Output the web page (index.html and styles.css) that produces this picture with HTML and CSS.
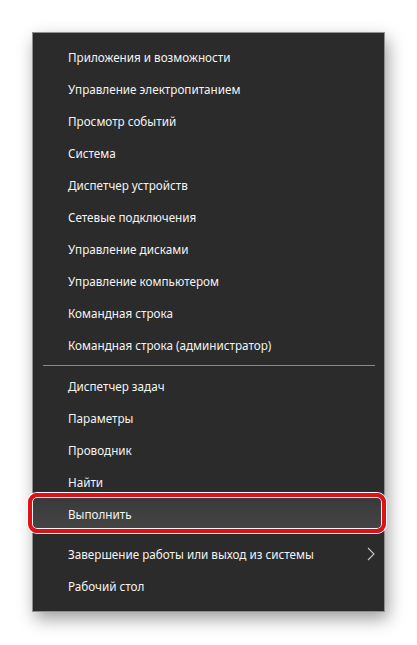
FILE: index.html
```html
<!DOCTYPE html>
<html lang="ru">
<head>
<meta charset="utf-8">
<link rel="stylesheet" href="styles.css">
</head>
<body>
<div class="menu">
  <div class="item">Приложения и возможности</div>
  <div class="item">Управление электропитанием</div>
  <div class="item">Просмотр событий</div>
  <div class="item">Система</div>
  <div class="item">Диспетчер устройств</div>
  <div class="item">Сетевые подключения</div>
  <div class="item">Управление дисками</div>
  <div class="item">Управление компьютером</div>
  <div class="item">Командная строка</div>
  <div class="item">Командная строка (администратор)</div>
  <div class="sep"></div>
  <div class="item">Диспетчер задач</div>
  <div class="item">Параметры</div>
  <div class="item">Проводник</div>
  <div class="item">Найти</div>
  <div class="item active">Выполнить<span class="annot"></span></div>
  <div class="gap"></div>
  <div class="item sub">Завершение работы или выход из системы
    <svg class="chev" width="8" height="14" viewBox="0 0 8 14"><path d="M1 1 L7 7 L1 13" fill="none" stroke="#c8c8c8" stroke-width="1.1"/></svg>
  </div>
  <div class="item">Рабочий стол</div>
</div>
</body>
</html>
```
FILE: styles.css
```css
html, body {
  margin: 0;
  padding: 0;
  background: #ffffff;
}
body {
  width: 417px;
  height: 645px;
  overflow: hidden;
  font-family: "Noto Sans", "Open Sans", sans-serif;
}
.menu {
  margin: 32px 0 0 32px;
  width: 351px;
  border: 1px solid #8f8f8f;
  background: #2b2b2b;
  padding: 8px 0 9px;
  box-shadow: 3px 7px 16px rgba(0, 0, 0, 0.38);
  display: flex;
  flex-direction: column;
}
.item {
  position: relative;
  height: 32px;
  display: flex;
  align-items: center;
  padding-left: 35px;
  color: #f4f4f4;
  font-size: 11.7px;
  white-space: nowrap;
}
.item.active {
  background: linear-gradient(#3a3a3a, #454545);
}
.sep {
  height: 1px;
  margin: 4px 9px 4px 10px;
  background: #8a8a8a;
}
.gap {
  height: 8px;
}
.chev {
  position: absolute;
  right: 9px;
  top: 9px;
}
.annot {
  position: absolute;
  left: -5px;
  right: -2px;
  top: -5px;
  bottom: -3px;
  border: 4px solid #e01019;
  border-radius: 9px;
  box-shadow: 0 0 0 1px #ffffff, inset 0 0 0 1px #f4f4f4;
}
```
